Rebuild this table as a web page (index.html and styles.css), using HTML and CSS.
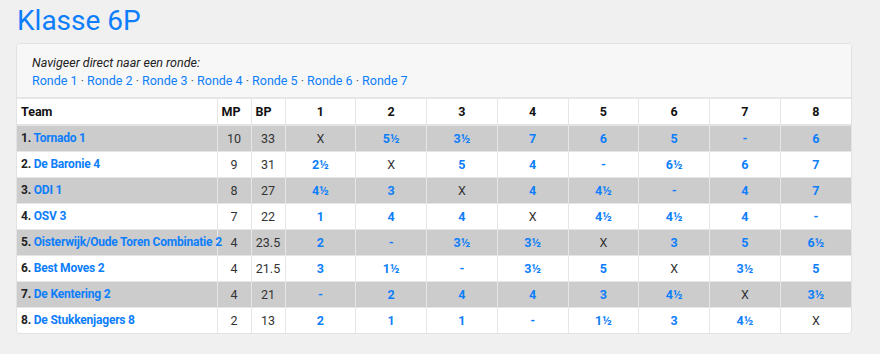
FILE: index.html
```html
<!DOCTYPE html>
<html lang="nl">
<head>
<meta charset="utf-8">
<title>Klasse 6P</title>
<link rel="stylesheet" href="styles.css">
</head>
<body>
<h1 class="title">Klasse 6P</h1>
<div class="card">
  <div class="card-header">
    <div class="nav-label">Navigeer direct naar een ronde:</div>
    <div class="nav-links"><a href="#">Ronde 1</a> · <a href="#">Ronde 2</a> · <a href="#">Ronde 3</a> · <a href="#">Ronde 4</a> · <a href="#">Ronde 5</a> · <a href="#">Ronde 6</a> · <a href="#">Ronde 7</a></div>
  </div>
  <table class="standings">
    <colgroup>
      <col class="c-team"><col class="c-pt"><col class="c-pt">
      <col><col><col><col><col><col><col><col>
    </colgroup>
    <thead>
      <tr><th class="left">Team</th><th class="left">MP</th><th class="left">BP</th><th>1</th><th>2</th><th>3</th><th>4</th><th>5</th><th>6</th><th>7</th><th>8</th></tr>
    </thead>
    <tbody>
      <tr class="odd"><td class="team">1. <a href="#">Tornado 1</a></td><td>10</td><td>33</td><td>X</td><td><a href="#">5½</a></td><td><a href="#">3½</a></td><td><a href="#">7</a></td><td><a href="#">6</a></td><td><a href="#">5</a></td><td><a href="#">-</a></td><td><a href="#">6</a></td></tr>
      <tr><td class="team">2. <a href="#">De Baronie 4</a></td><td>9</td><td>31</td><td><a href="#">2½</a></td><td>X</td><td><a href="#">5</a></td><td><a href="#">4</a></td><td><a href="#">-</a></td><td><a href="#">6½</a></td><td><a href="#">6</a></td><td><a href="#">7</a></td></tr>
      <tr class="odd"><td class="team">3. <a href="#">ODI 1</a></td><td>8</td><td>27</td><td><a href="#">4½</a></td><td><a href="#">3</a></td><td>X</td><td><a href="#">4</a></td><td><a href="#">4½</a></td><td><a href="#">-</a></td><td><a href="#">4</a></td><td><a href="#">7</a></td></tr>
      <tr><td class="team">4. <a href="#">OSV 3</a></td><td>7</td><td>22</td><td><a href="#">1</a></td><td><a href="#">4</a></td><td><a href="#">4</a></td><td>X</td><td><a href="#">4½</a></td><td><a href="#">4½</a></td><td><a href="#">4</a></td><td><a href="#">-</a></td></tr>
      <tr class="odd"><td class="team">5. <a href="#">Oisterwijk/Oude Toren Combinatie 2</a></td><td>4</td><td>23.5</td><td><a href="#">2</a></td><td><a href="#">-</a></td><td><a href="#">3½</a></td><td><a href="#">3½</a></td><td>X</td><td><a href="#">3</a></td><td><a href="#">5</a></td><td><a href="#">6½</a></td></tr>
      <tr><td class="team">6. <a href="#">Best Moves 2</a></td><td>4</td><td>21.5</td><td><a href="#">3</a></td><td><a href="#">1½</a></td><td><a href="#">-</a></td><td><a href="#">3½</a></td><td><a href="#">5</a></td><td>X</td><td><a href="#">3½</a></td><td><a href="#">5</a></td></tr>
      <tr class="odd"><td class="team">7. <a href="#">De Kentering 2</a></td><td>4</td><td>21</td><td><a href="#">-</a></td><td><a href="#">2</a></td><td><a href="#">4</a></td><td><a href="#">4</a></td><td><a href="#">3</a></td><td><a href="#">4½</a></td><td>X</td><td><a href="#">3½</a></td></tr>
      <tr><td class="team">8. <a href="#">De Stukkenjagers 8</a></td><td>2</td><td>13</td><td><a href="#">2</a></td><td><a href="#">1</a></td><td><a href="#">1</a></td><td><a href="#">-</a></td><td><a href="#">1½</a></td><td><a href="#">3</a></td><td><a href="#">4½</a></td><td>X</td></tr>
    </tbody>
  </table>
</div>
</body>
</html>
```
FILE: styles.css
```css
* { box-sizing: border-box; }
body {
  margin: 0;
  padding: 0 28px 0 16px;
  background: #f0f0f0;
  font-family: Roboto, "Noto Sans", sans-serif;
  color: #212529;
}
a { color: #0d7efb; text-decoration: none; }
.title {
  margin: 0;
  padding: 0 0 0 1px;
  height: 43px;
  font-size: 28px;
  font-weight: 400;
  line-height: 42px;
  color: #0d7efb;
}
.card {
  background: #fff;
  border: 1px solid #e2e2e2;
  border-radius: 4px;
  overflow: hidden;
}
.card-header {
  background: #f7f7f7;
  border-bottom: 2px solid #e6e6e6;
  padding: 10px 15px 7px;
  font-size: 12.5px;
  line-height: 18px;
}
.nav-label { font-style: italic; color: #222; }
.nav-links { color: #555; }
.standings {
  width: 100%;
  border-collapse: collapse;
  table-layout: fixed;
  font-size: 12.5px;
}
.c-team { width: 200px; }
.c-pt { width: 34px; }
.standings th, .standings td {
  height: 26px;
  padding: 0 4px;
  border-left: 1px solid #e6e6e6;
  border-top: 1px solid #e6e6e6;
  text-align: center;
  white-space: nowrap;
  vertical-align: middle;
}
.standings tr > :first-child { border-left: 0; }
.standings thead th { border-top: 0; border-bottom: 2px solid #e4e4e4; font-weight: 700; color: #111; }
.standings th.left { text-align: left; }
.standings td { color: #333; }
.standings td a { font-weight: 700; }
.standings td.team { text-align: left; font-weight: 700; color: #222; font-size: 12px; letter-spacing: -0.2px; }
.standings tr.odd td { background: #cccccc; }
```
